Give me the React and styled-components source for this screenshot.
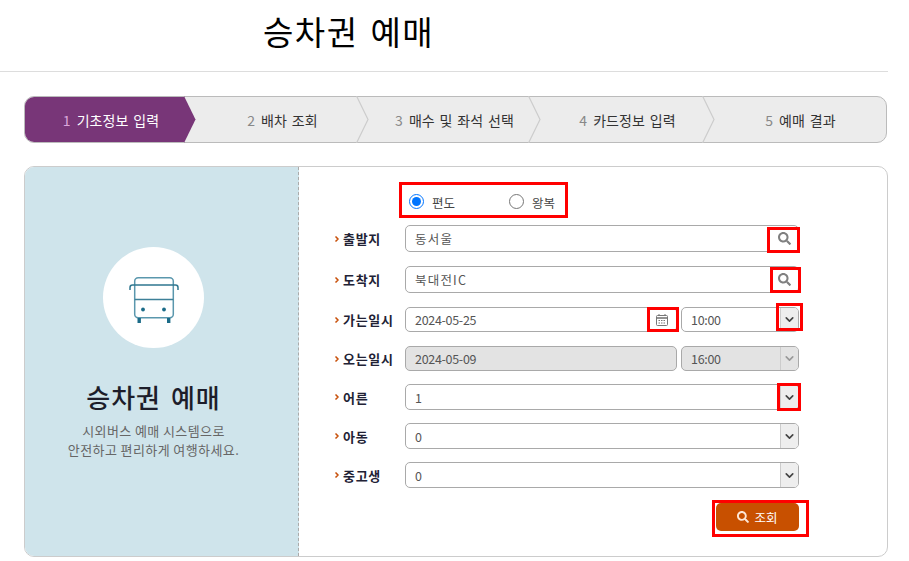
import React from 'react';
import styled, { createGlobalStyle } from 'styled-components';
import { ChevronDown, ChevronRight } from 'lucide-react';
import { FaSearch } from 'react-icons/fa';

const GlobalStyle = createGlobalStyle`
  body {
    margin: 0;
    background: #fff;
    font-family: "Noto Sans CJK KR", "Liberation Sans", sans-serif;
  }
  * { box-sizing: border-box; }
`;

const Page = styled.div`
  width: 909px;
  height: 561px;
  overflow: hidden;
`;

const Header = styled.header`
  width: 888px;
  height: 72px;
  padding: 9px 0 0 263px;
  border-bottom: 1px solid #ddd;
`;

const PageTitle = styled.h1`
  margin: 0;
  font-size: 33px;
  line-height: 44px;
  font-weight: 400;
  color: #000;
  letter-spacing: 1.5px;
  word-spacing: 3px;
`;

const Main = styled.main`
  width: 864px;
  margin-left: 24px;
  padding-top: 24px;
`;

const Steps = styled.ol`
  display: grid;
  grid-template-columns: 159px 172px 172px 174px 1fr;
  width: 863px;
  height: 47px;
  margin: 0 0 23px;
  padding: 0;
  list-style: none;
  background: #ececec;
  border: 1px solid #bbb;
  border-radius: 10px;
`;

const Step = styled.li`
  position: relative;
  display: flex;
  align-items: center;
  justify-content: center;
  padding-left: 25px;
  font-size: 14px;
  letter-spacing: 0.1px;
  word-spacing: 1.5px;
  white-space: pre;
  color: ${p => (p.$active ? '#fff' : '#333')};
  background: ${p => (p.$active ? '#783678' : 'transparent')};
  border-radius: ${p => (p.$active ? '9px 0 0 9px' : '0')};
  &:first-child, &:last-child { padding-left: 13px; }
`;

const StepNo = styled.span`
  margin-right: 6px;
  color: ${p => (p.$active ? '#dca6dc' : '#888')};
`;

const ArrowSvg = styled.svg`
  position: absolute;
  left: 100%;
  top: -1px;
  width: 13px;
  height: 47px;
  z-index: 1;
`;

const StepArrow = ({ active }) => (
  <ArrowSvg viewBox="0 0 13 47">
    {active
      ? <polygon points="0,0 11.5,23.5 0,47" fill="#783678" />
      : <polyline points="0.5,0 12,23.5 0.5,47" fill="none" stroke="#ccc" strokeWidth="1.2" />}
  </ArrowSvg>
);

const Panel = styled.section`
  display: flex;
  height: 391px;
  border: 1px solid #ccc;
  border-radius: 10px;
`;

const Intro = styled.aside`
  width: 274px;
  padding: 80px 16px 0 0;
  display: flex;
  flex-direction: column;
  align-items: center;
  background: #cfe4eb;
  border-right: 1px dashed #aaa;
  border-radius: 9px 0 0 9px;
`;

const Circle = styled.div`
  width: 101px;
  height: 101px;
  padding-top: 4px;
  display: flex;
  align-items: center;
  justify-content: center;
  border-radius: 50%;
  background: #fff;
`;

const IntroTitle = styled.h2`
  margin: 31px 0 0;
  font-size: 26px;
  line-height: 36px;
  font-weight: 500;
  color: #1d1d2a;
  letter-spacing: 1px;
  word-spacing: 3px;
`;

const IntroText = styled.p`
  margin: 6px 0 0;
  font-size: 13px;
  line-height: 19px;
  letter-spacing: 0.4px;
  text-align: center;
  color: #666;
`;

const Form = styled.form`
  width: 500px;
  padding: 15px 0 0 34px;
`;

const RadioBox = styled.div`
  display: flex;
  align-items: center;
  width: 169px;
  height: 36px;
  margin: 0 0 7px 66px;
  padding: 3px 0 0 7px;
  border: 3px solid #f00;
`;

const RadioLabel = styled.label`
  display: flex;
  align-items: center;
  width: 100px;
  font-size: 12.5px;
  color: #444;
  span { position: relative; top: 1px; }
  &:last-child { width: auto; }
`;

const Radio = styled.input`
  width: 15px;
  height: 15px;
  margin: 0 8px 0 0;
`;

const Row = styled.div`
  display: flex;
  align-items: center;
  gap: 4px;
  height: ${p => p.$h}px;
  margin-bottom: ${p => p.$gap}px;
`;

const Label = styled.label`
  display: flex;
  align-items: center;
  gap: 2px;
  width: 68px;
  font-size: 13px;
  font-weight: 700;
  letter-spacing: 0.7px;
  color: #222235;
  svg { color: #c8500a; }
`;

const Field = styled.div`
  position: relative;
  display: flex;
  align-items: center;
  justify-content: space-between;
  flex: ${p => (p.$w ? `0 0 ${p.$w}px` : '1')};
  height: 100%;
  padding-left: 9px;
  font-size: 12.5px;
  letter-spacing: ${p => (p.$num ? '-0.3px' : '1.2px')};
  color: #555;
  background: ${p => (p.$disabled ? '#e3e3e3' : '#fff')};
  border: 1px solid #a9a9a9;
  border-radius: 5px;
`;

const SelectArrow = styled.span`
  display: flex;
  align-items: center;
  justify-content: center;
  width: 18px;
  height: 100%;
  color: ${p => (p.$disabled ? '#999' : '#444')};
  background: ${p => (p.$disabled ? '#e3e3e3' : '#eee')};
  border-left: 1px solid #ccc;
  border-radius: 0 4px 4px 0;
`;

const FieldIcon = styled.span`
  display: flex;
  align-items: center;
  margin-right: ${p => p.$right}px;
  color: #808080;
`;

// red annotation box drawn over the screenshot
const Mark = styled.i`
  position: absolute;
  left: ${p => p.$x}px;
  top: ${p => p.$y}px;
  width: ${p => p.$w}px;
  height: ${p => p.$h}px;
  border: 3px solid #f00;
  pointer-events: none;
`;

const Actions = styled.div`
  display: flex;
  justify-content: flex-end;
  margin-top: 15px;
`;

const Submit = styled.button`
  position: relative;
  display: flex;
  align-items: center;
  justify-content: center;
  gap: 5px;
  width: 83px;
  height: 28px;
  padding: 0;
  font-family: inherit;
  font-size: 12.5px;
  color: #fff;
  background: #c85000;
  border: none;
  border-radius: 5px;
  svg { color: #fde6d6; }
`;

const BusIcon = () => (
  <svg width="50" height="46" viewBox="0 0 50 46" fill="none" stroke="#5a97ad" strokeWidth="1.5">
    <rect x="5.7" y="0.8" width="38.6" height="40" rx="3.5" />
    <path d="M5.7 22.5h38.6" stroke="#3d8098" />
    <path d="M1 13v-2.5a2.5 2.5 0 0 1 2.5-2.5h43a2.5 2.5 0 0 1 2.5 2.5V13" stroke="#2f7790" />
    <circle cx="14" cy="32.5" r="1.9" fill="#1b6b88" stroke="none" />
    <circle cx="35" cy="32.5" r="1.9" fill="#1b6b88" stroke="none" />
    <rect x="8.5" y="41" width="3.4" height="5" fill="#1b6b88" stroke="none" />
    <rect x="38" y="41" width="3.4" height="5" fill="#1b6b88" stroke="none" />
  </svg>
);

const CalendarIcon = () => (
  <svg width="12" height="12" viewBox="0 0 12 12" fill="none" stroke="#777" strokeWidth="1">
    <rect x="0.5" y="1.5" width="11" height="10" rx="1" />
    <path d="M0.5 4h11" strokeWidth="1.6" />
    <path d="M3 0v2M9 0v2" />
    <path d="M2.5 6.5h7M2.5 9h7" strokeDasharray="1.5 1" />
  </svg>
);

const steps = ['기초정보 입력', '배차 조회', '매수 및 좌석 선택', '카드정보 입력', '예매 결과'];

const Arrow = ({ disabled }) => (
  <SelectArrow $disabled={disabled}>
    <ChevronDown size={13} strokeWidth={3} />
  </SelectArrow>
);

const Bullet = () => <ChevronRight size={8} strokeWidth={5} />;

const App = () => (
  <Page>
    <GlobalStyle />
    <Header>
      <PageTitle>승차권 예매</PageTitle>
    </Header>
    <Main>
      <Steps>
        {steps.map((s, i) => (
          <Step key={s} $active={i === 0}>
            <StepNo $active={i === 0}>{i + 1}</StepNo>
            {s}
            {i < 4 && <StepArrow active={i === 0} />}
          </Step>
        ))}
      </Steps>
      <Panel>
        <Intro>
          <Circle><BusIcon /></Circle>
          <IntroTitle>승차권 예매</IntroTitle>
          <IntroText>시외버스 예매 시스템으로<br />안전하고 편리하게 여행하세요.</IntroText>
        </Intro>
        <Form>
          <RadioBox>
            <RadioLabel><Radio type="radio" name="trip" defaultChecked /><span>편도</span></RadioLabel>
            <RadioLabel><Radio type="radio" name="trip" /><span>왕복</span></RadioLabel>
          </RadioBox>
          <Row $h={27} $gap={14}>
            <Label><Bullet />출발지</Label>
            <Field>
              동서울
              <FieldIcon $right={7}><FaSearch size={13} /></FieldIcon>
              <Mark $x={361} $y={1} $w={33} $h={26} />
            </Field>
          </Row>
          <Row $h={27} $gap={14}>
            <Label><Bullet />도착지</Label>
            <Field>
              북대전IC
              <FieldIcon $right={7}><FaSearch size={13} /></FieldIcon>
              <Mark $x={364} $y={0} $w={31} $h={26} />
            </Field>
          </Row>
          <Row $h={25} $gap={14}>
            <Label><Bullet />가는일시</Label>
            <Field $w={272} $num>
              2024-05-25
              <FieldIcon $right={8}><CalendarIcon /></FieldIcon>
              <Mark $x={241} $y={-1} $w={32} $h={25} />
            </Field>
            <Field $num>
              10:00
              <Arrow />
              <Mark $x={94} $y={-5} $w={27} $h={28} />
            </Field>
          </Row>
          <Row $h={25} $gap={13}>
            <Label><Bullet />오는일시</Label>
            <Field $w={272} $disabled $num>2024-05-09</Field>
            <Field $disabled $num>
              16:00
              <Arrow disabled />
            </Field>
          </Row>
          <Row $h={26} $gap={13}>
            <Label><Bullet />어른</Label>
            <Field $num>
              1
              <Arrow />
              <Mark $x={371} $y={-2} $w={24} $h={28} />
            </Field>
          </Row>
          <Row $h={26} $gap={13}>
            <Label><Bullet />아동</Label>
            <Field $num>
              0
              <Arrow />
            </Field>
          </Row>
          <Row $h={26} $gap={0}>
            <Label><Bullet />중고생</Label>
            <Field $num>
              0
              <Arrow />
            </Field>
          </Row>
          <Actions>
            <Submit type="button">
              <FaSearch size={12} />
              조회
              <Mark $x={-4} $y={-3} $w={97} $h={37} />
            </Submit>
          </Actions>
        </Form>
      </Panel>
    </Main>
  </Page>
);

export default App;
